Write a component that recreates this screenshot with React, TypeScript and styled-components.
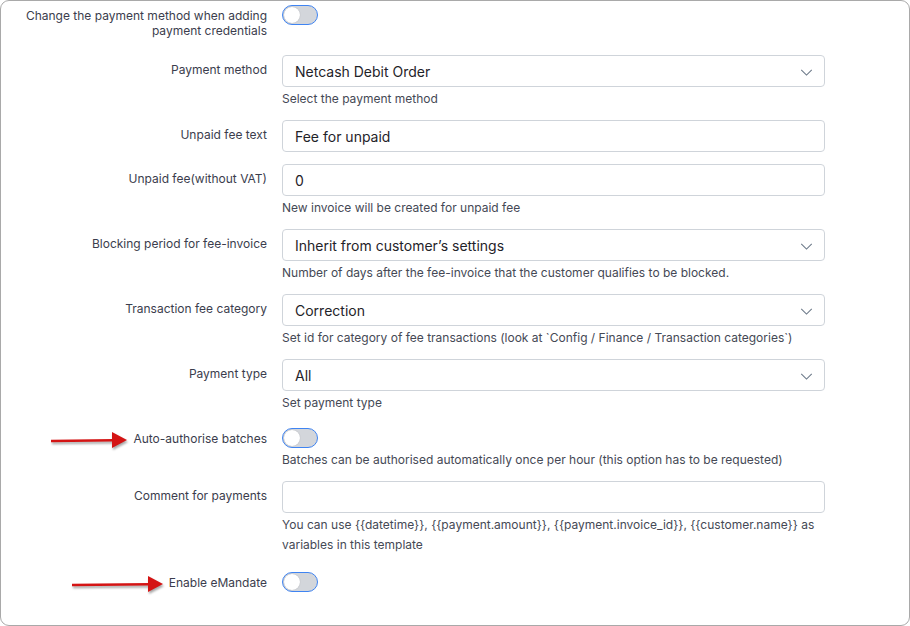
import styled, { createGlobalStyle } from "styled-components";

const GlobalStyle = createGlobalStyle`
  body {
    margin: 0;
    background: #ffffff;
    font-family: Inter, "Noto Sans", sans-serif;
  }
`;

const App = () => {
  return (
    <>
      <GlobalStyle />
      <Card>
        <Row $gap={17}>
          <Label>Change the payment method when adding payment credentials</Label>
          <Field>
            <Switch />
          </Field>
        </Row>

        <Row>
          <Label>Payment method</Label>
          <Field>
            <Select value="Netcash Debit Order" />
            <Help>Select the payment method</Help>
          </Field>
        </Row>

        <Row $gap={12}>
          <Label>Unpaid fee text</Label>
          <Field>
            <Input>Fee for unpaid</Input>
          </Field>
        </Row>

        <Row>
          <Label>Unpaid fee(without VAT)</Label>
          <Field>
            <Input>0</Input>
            <Help>New invoice will be created for unpaid fee</Help>
          </Field>
        </Row>

        <Row>
          <Label>Blocking period for fee-invoice</Label>
          <Field>
            <Select value="Inherit from customer’s settings" />
            <Help>Number of days after the fee-invoice that the customer qualifies to be blocked.</Help>
          </Field>
        </Row>

        <Row>
          <Label>Transaction fee category</Label>
          <Field>
            <Select value="Correction" />
            <Help>
              Set id for category of fee transactions (look at `Config / Finance / Transaction
              categories`)
            </Help>
          </Field>
        </Row>

        <Row>
          <Label>Payment type</Label>
          <Field>
            <Select value="All" />
            <Help>Set payment type</Help>
          </Field>
        </Row>

        <Row>
          <Label>
            <LabelText>
              <Arrow width={76} />
              Auto-authorise batches
            </LabelText>
          </Label>
          <Field>
            <Switch />
            <Help>Batches can be authorised automatically once per hour (this option has to be requested)</Help>
          </Field>
        </Row>

        <Row $gap={13}>
          <Label>Comment for payments</Label>
          <Field>
            <Input />
            <Help>
              You can use {"{{datetime}}"}, {"{{payment.amount}}"}, {"{{payment.invoice_id}}"},{" "}
              {"{{customer.name}}"} as
              <br />
              variables in this template
            </Help>
          </Field>
        </Row>

        <Row>
          <Label>
            <LabelText>
              <Arrow width={91} />
              Enable eMandate
            </LabelText>
          </Label>
          <Field>
            <Switch />
          </Field>
        </Row>
      </Card>
    </>
  );
};

export default App;

const Select = ({ value }: { value: string }) => (
  <Input>
    {value}
    <Chevron viewBox="0 0 14 8">
      <path d="M1 1l6 6 6-6" fill="none" stroke="#6b7888" strokeWidth="1.2" />
    </Chevron>
  </Input>
);

const Switch = () => (
  <Track>
    <Knob />
  </Track>
);

const Arrow = ({ width }: { width: number }) => (
  <ArrowSvg width={width} height={20} viewBox={`0 0 ${width} 20`} style={{ width }}>
    <line x1="0" y1="11" x2={width - 13} y2="10.3" stroke="#d41414" strokeWidth="2.6" />
    <polygon points={`${width - 15},2 ${width},10 ${width - 15},18`} fill="#d41414" />
  </ArrowSvg>
);

const Card = styled.div`
  box-sizing: border-box;
  width: 910px;
  height: 626px;
  border: 1px solid #a9a9a9;
  border-radius: 9px;
  overflow: hidden;
`;

const Row = styled.div<{ $gap?: number }>`
  display: grid;
  grid-template-columns: 266px 543px;
  column-gap: 15px;
  margin-bottom: ${(p) => p.$gap ?? 11}px;
`;

const Label = styled.div`
  padding-top: 7px;
  text-align: right;
  font-size: 12px;
  line-height: 15px;
  color: #3b3d4d;
`;

const LabelText = styled.span`
  position: relative;
`;

const ArrowSvg = styled.svg`
  position: absolute;
  right: calc(100% + 6px);
  top: -1px;
  overflow: visible;
  filter: drop-shadow(1px 2px 1.2px rgba(0, 0, 0, 0.35));
`;

const Field = styled.div`
  display: flex;
  flex-direction: column;
  align-items: flex-start;
`;

const Input = styled.div`
  position: relative;
  box-sizing: border-box;
  width: 100%;
  height: 32px;
  padding: 0 12px;
  display: flex;
  align-items: center;
  border: 1px solid #cfd4da;
  border-radius: 4px;
  font-size: 14px;
  color: #1f2329;
`;

const Chevron = styled.svg`
  position: absolute;
  right: 11px;
  top: 13px;
  width: 13px;
  height: 7px;
`;

const Help = styled.div`
  margin-top: 2px;
  font-size: 12px;
  line-height: 20px;
  color: #454955;
`;

const Track = styled.div`
  box-sizing: border-box;
  margin-top: 4px;
  width: 36px;
  height: 20px;
  border: 1px solid #3f84f2;
  border-radius: 10px;
  background: #d3d6db;
  display: flex;
  align-items: center;
  padding-left: 1px;
`;

const Knob = styled.div`
  width: 16px;
  height: 16px;
  border-radius: 50%;
  background: #ffffff;
  box-shadow: 0 0 1px rgba(0, 0, 0, 0.25);
`;
